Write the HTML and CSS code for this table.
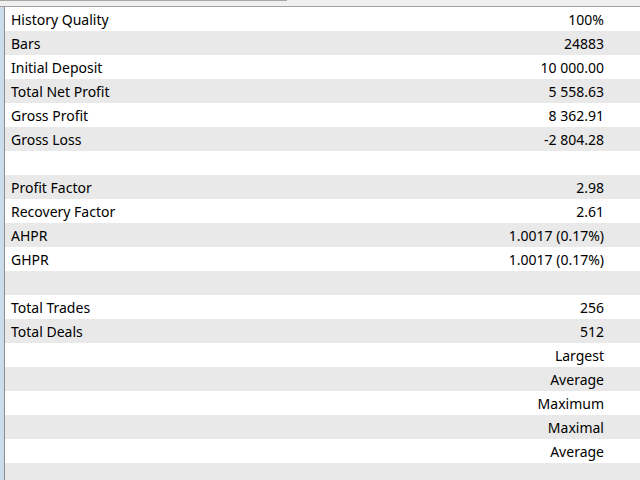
FILE: index.html
```html
<!DOCTYPE html>
<html>
<head>
<meta charset="utf-8">
<link rel="stylesheet" href="styles.css">
</head>
<body>
<div class="window">
  <div class="topbar"><div class="thumb"></div></div>
  <div class="main">
    <div class="side"></div>
    <div class="table">
      <div class="row"><span class="label">History Quality</span><span class="value">100%</span></div>
      <div class="row"><span class="label">Bars</span><span class="value">24883</span></div>
      <div class="row"><span class="label">Initial Deposit</span><span class="value">10 000.00</span></div>
      <div class="row"><span class="label">Total Net Profit</span><span class="value">5 558.63</span></div>
      <div class="row"><span class="label">Gross Profit</span><span class="value">8 362.91</span></div>
      <div class="row"><span class="label">Gross Loss</span><span class="value">-2 804.28</span></div>
      <div class="row"><span class="label"></span><span class="value"></span></div>
      <div class="row"><span class="label">Profit Factor</span><span class="value">2.98</span></div>
      <div class="row"><span class="label">Recovery Factor</span><span class="value">2.61</span></div>
      <div class="row"><span class="label">AHPR</span><span class="value">1.0017 (0.17%)</span></div>
      <div class="row"><span class="label">GHPR</span><span class="value">1.0017 (0.17%)</span></div>
      <div class="row"><span class="label"></span><span class="value"></span></div>
      <div class="row"><span class="label">Total Trades</span><span class="value">256</span></div>
      <div class="row"><span class="label">Total Deals</span><span class="value">512</span></div>
      <div class="row"><span class="label"></span><span class="value">Largest</span></div>
      <div class="row"><span class="label"></span><span class="value">Average</span></div>
      <div class="row"><span class="label"></span><span class="value">Maximum</span></div>
      <div class="row"><span class="label"></span><span class="value">Maximal</span></div>
      <div class="row"><span class="label"></span><span class="value">Average</span></div>
      <div class="row"><span class="label"></span><span class="value"></span></div>
    </div>
  </div>
</div>
</body>
</html>
```

FILE: styles.css
```css
html, body {
  margin: 0;
  padding: 0;
  background: #ffffff;
}
.window {
  width: 640px;
  height: 480px;
  overflow: hidden;
  display: flex;
  flex-direction: column;
  font-family: "Noto Sans", "Open Sans", sans-serif;
  font-size: 14px;
  color: #000000;
}
.topbar {
  height: 6px;
  background: #f0f0f0;
  border-bottom: 1px solid #a0a0a0;
  flex: none;
}
.thumb {
  width: 287px;
  height: 1px;
  background: #a8a8a8;
}
.main {
  flex: 1;
  display: flex;
  min-height: 0;
}
.side {
  width: 4px;
  background: #cddcec;
  border-right: 1px solid #8e8e8e;
  flex: none;
}
.table {
  flex: 1;
  display: flex;
  flex-direction: column;
}
.row {
  height: 24px;
  box-sizing: border-box;
  flex: none;
  display: flex;
  align-items: center;
  justify-content: space-between;
  padding: 1px 36px 0 6px;
}
.row:nth-child(even) {
  background: #e9e9e9;
}
.label, .value {
  white-space: nowrap;
  line-height: 23px;
}
```
